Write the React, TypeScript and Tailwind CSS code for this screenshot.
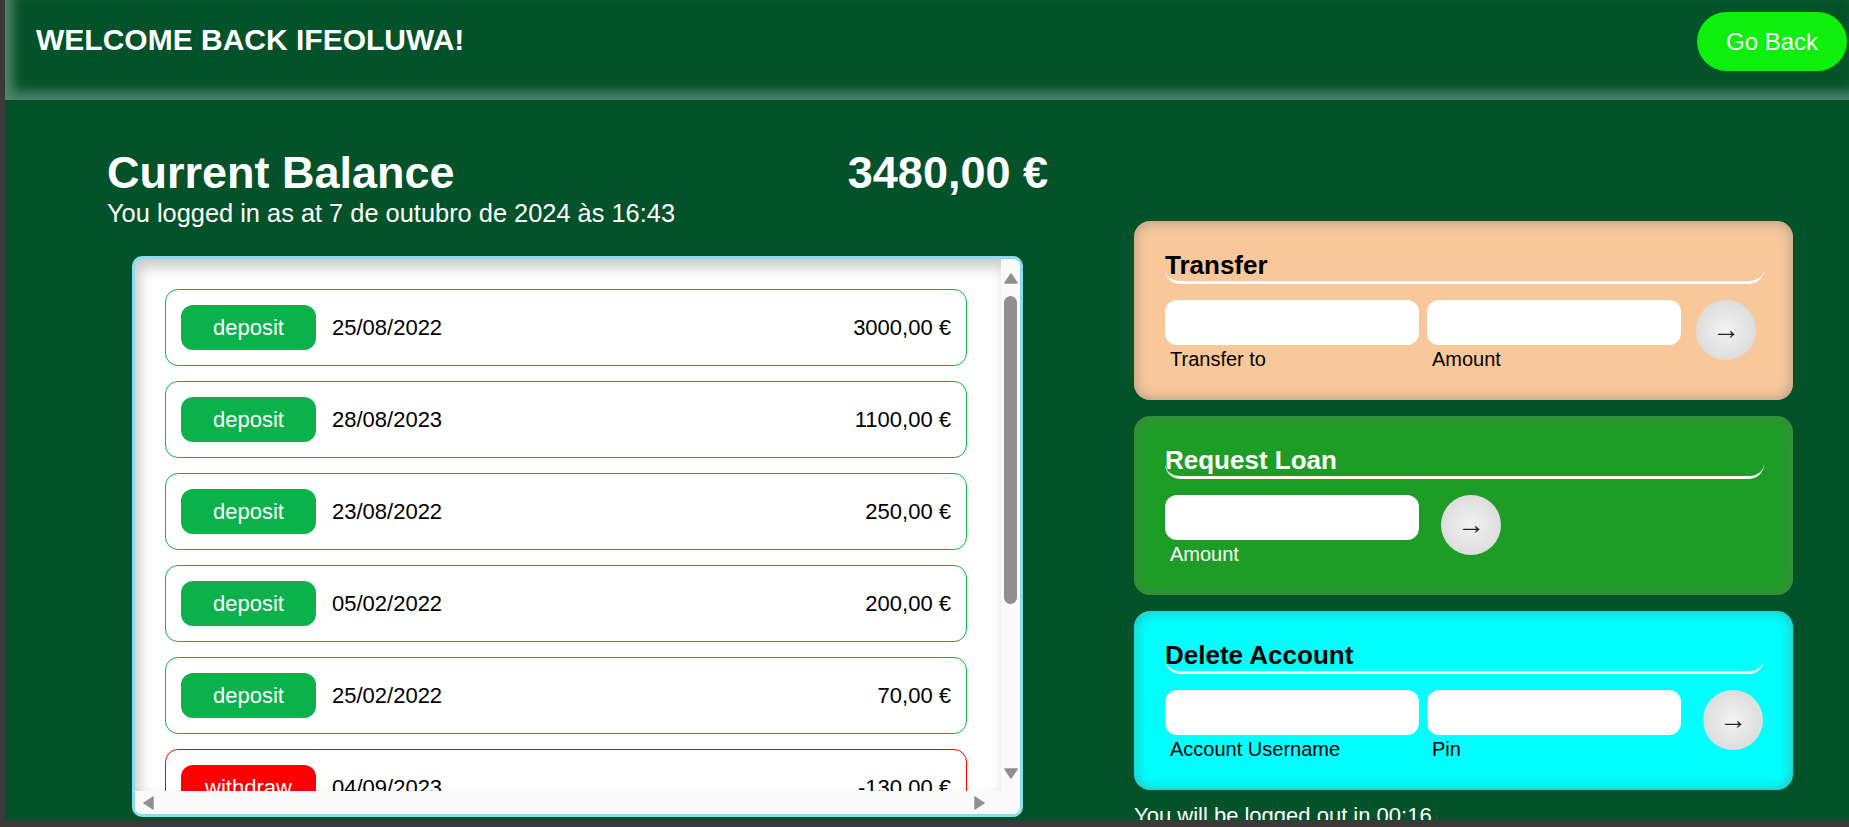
import React from "react";

type Movement = {
  type: "deposit" | "withdraw";
  date: string;
  amount: string;
};

const movements: Movement[] = [
  { type: "deposit", date: "25/08/2022", amount: "3000,00 €" },
  { type: "deposit", date: "28/08/2023", amount: "1100,00 €" },
  { type: "deposit", date: "23/08/2022", amount: "250,00 €" },
  { type: "deposit", date: "05/02/2022", amount: "200,00 €" },
  { type: "deposit", date: "25/02/2022", amount: "70,00 €" },
  { type: "withdraw", date: "04/09/2023", amount: "-130,00 €" },
];

const Arrow: React.FC<{ dir: "up" | "down" | "left" | "right" }> = ({ dir }) => {
  const points = {
    up: "7,1 13,10 1,10",
    down: "1,1 13,1 7,10",
    left: "10,1 10,13 1,7",
    right: "1,1 1,13 10,7",
  }[dir];
  const vertical = dir === "up" || dir === "down";
  return (
    <svg
      width={vertical ? 14 : 11}
      height={vertical ? 11 : 14}
      viewBox={vertical ? "0 0 14 11" : "0 0 11 14"}
    >
      <polygon points={points} fill="#8f8f8f" strokeLinejoin="round" stroke="#8f8f8f" strokeWidth="1.5" />
    </svg>
  );
};

const Field: React.FC<{ label: string; light?: boolean }> = ({ label, light }) => (
  <div className="flex flex-col w-[254px]">
    <div className="h-[45px] rounded-[12px] bg-white" />
    <span
      className={`text-[20px] leading-[23px] pl-[5px] mt-[3px] ${
        light ? "text-white" : "text-black"
      }`}
    >
      {label}
    </span>
  </div>
);

const GoButton: React.FC<{ className?: string }> = ({ className }) => (
  <button
    className={`w-[60px] h-[60px] shrink-0 rounded-full bg-[radial-gradient(circle,#f3f3f3,#d4d4d4)] flex items-center justify-center text-[28px] leading-none text-[#222] ${className ?? ""}`}
  >
    →
  </button>
);

const Panel: React.FC<{
  title: string;
  bg: string;
  light?: boolean;
  children: React.ReactNode;
}> = ({ title, bg, light, children }) => (
  <div
    className={`h-[179px] rounded-[16px] pl-[31px] pr-[29px] pt-[29px] shadow-[inset_0_0_14px_rgba(110,110,110,0.55)] ${bg}`}
  >
    <h3
      className={`text-[26px] font-bold leading-[30px] pb-[1px] border-b-[3px] border-white rounded-b-[15px] ${
        light ? "text-white" : "text-black"
      }`}
    >
      {title}
    </h3>
    <div className="flex items-start mt-[16px]">{children}</div>
  </div>
);

export default function App() {
  return (
    <div className="h-[827px] w-[1849px] overflow-hidden bg-[#3a3a3a] pl-[5px] pb-[7px] font-['Liberation_Sans',Arial,sans-serif]">
      <div className="h-full bg-[#03522a] overflow-hidden">
        <header className="h-[100px] flex items-start justify-between pl-[31px] pr-[2px] pt-[12px] shadow-[inset_8px_-8px_12px_rgba(255,255,255,0.3)]">
          <h1 className="text-[30px] font-bold text-white leading-[56px]">
            WELCOME BACK IFEOLUWA!
          </h1>
          <button className="w-[150px] h-[59px] rounded-full bg-[#0cf00c] text-white text-[24px]">
            Go Back
          </button>
        </header>

        <main className="flex pl-[102px] pt-[47px]">
          <section className="w-[941px] shrink-0">
            <div className="flex justify-between items-baseline text-white font-bold text-[45px] leading-[52px]">
              <h2>Current Balance</h2>
              <span>3480,00 €</span>
            </div>
            <p className="text-white text-[25.4px] leading-[29px]">
              You logged in as at 7 de outubro de 2024 às 16:43
            </p>

            <div className="mt-[28px] mx-[25px] h-[561px] border-[3px] border-[#8adcf1] rounded-[10px] bg-white overflow-hidden flex flex-col">
              <div className="flex h-[532px]">
                <div className="flex-1 overflow-hidden pl-[30px] pr-[34px] pt-[30px] flex flex-col gap-[15px] shadow-[inset_4px_8px_14px_rgba(0,0,0,0.22)]">
                  {movements.map((m, i) => (
                    <div
                      key={i}
                      className={`h-[77px] shrink-0 rounded-[13px] border flex items-center px-[15px] gap-[16px] text-[22px] ${
                        m.type === "deposit" ? "border-[#0bb34b]" : "border-[#ff0000]"
                      }`}
                    >
                      <span
                        className={`w-[135px] h-[45px] rounded-[12px] flex items-center justify-center text-white ${
                          m.type === "deposit" ? "bg-[#0bb14b]" : "bg-[#ff0000]"
                        }`}
                      >
                        {m.type}
                      </span>
                      <span className="text-black">{m.date}</span>
                      <span className="ml-auto text-black">{m.amount}</span>
                    </div>
                  ))}
                </div>
                <div className="w-[19px] bg-[#fafafa] flex flex-col items-center pt-[14px] pb-[12px]">
                  <Arrow dir="up" />
                  <div className="w-[13px] h-[308px] mt-[12px] rounded-full bg-[#8f8f8f]" />
                  <div className="flex-1" />
                  <Arrow dir="down" />
                </div>
              </div>
              <div className="flex h-[23px] bg-[#fafafa]">
                <div className="flex-1 flex items-center justify-between pl-[8px] pr-[16px]">
                  <Arrow dir="left" />
                  <Arrow dir="right" />
                </div>
                <div className="w-[19px]" />
              </div>
            </div>
          </section>

          <aside className="w-[659px] ml-[86px] mt-[74px] flex flex-col gap-[16px]">
            <Panel title="Transfer" bg="bg-[#f8c89b]">
              <div className="flex gap-[8px]">
                <Field label="Transfer to" />
                <Field label="Amount" />
              </div>
              <GoButton className="ml-[15px]" />
            </Panel>
            <Panel title="Request Loan" bg="bg-[#1e9d26]" light>
              <Field label="Amount" light />
              <GoButton className="ml-[22px]" />
            </Panel>
            <Panel title="Delete Account" bg="bg-[#00ffff]">
              <div className="flex gap-[8px]">
                <Field label="Account Username" />
                <Field label="Pin" />
              </div>
              <GoButton className="ml-[22px]" />
            </Panel>
            <p className="text-white text-[22px] leading-[25px] -mt-[3px]">
              You will be logged out in 00:16
            </p>
          </aside>
        </main>
      </div>
    </div>
  );
}
